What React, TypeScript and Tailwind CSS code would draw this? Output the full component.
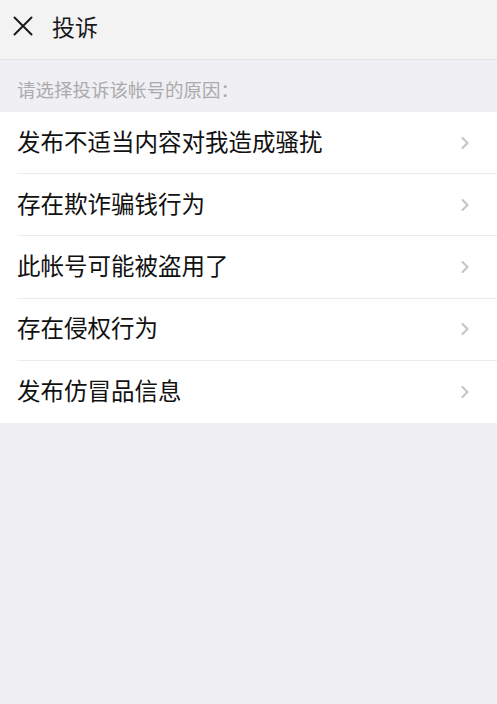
import { ChevronRight } from 'lucide-react';

const reasons = [
  '发布不适当内容对我造成骚扰',
  '存在欺诈骗钱行为',
  '此帐号可能被盗用了',
  '存在侵权行为',
  '发布仿冒品信息',
];

export default function App() {
  return (
    <div
      className="min-h-[704px] w-full bg-[#efeff4]"
      style={{ fontFamily: '"Noto Sans CJK SC", "Noto Sans", sans-serif' }}
    >
      <div className="flex h-[60px] items-center border-b border-[#e0e0e2] bg-[#f3f3f3] px-[13px] pb-[7px]">
        <svg width="20" height="20" viewBox="0 0 20 20" className="text-[#1a1a1a]">
          <path d="M1.5 1.5 L18.5 18.5 M18.5 1.5 L1.5 18.5" stroke="currentColor" strokeWidth="2" strokeLinecap="round" />
        </svg>
        <span className="ml-[19px] text-[23px] leading-none text-[#1a1a1a]">投诉</span>
      </div>

      <div className="flex h-[52px] items-center px-[17px] pt-[7px] text-[18.5px] leading-none text-[#ababab]">
        请选择投诉该帐号的原因：
      </div>

      <div className="bg-white">
        {reasons.map((r, i) => (
          <div key={r} className="flex h-[62.2px] items-center pl-[17px]">
            <div
              className={`flex h-full flex-1 items-center pr-[22px] ${
                i < reasons.length - 1 ? 'border-b border-[#ebebeb]' : ''
              }`}
            >
              <span className="flex-1 pb-[2px] text-[23.5px] leading-none text-[#111]">{r}</span>
              <ChevronRight size={20} strokeWidth={2.5} className="text-[#c4c4c6]" />
            </div>
          </div>
        ))}
      </div>
    </div>
  );
}
